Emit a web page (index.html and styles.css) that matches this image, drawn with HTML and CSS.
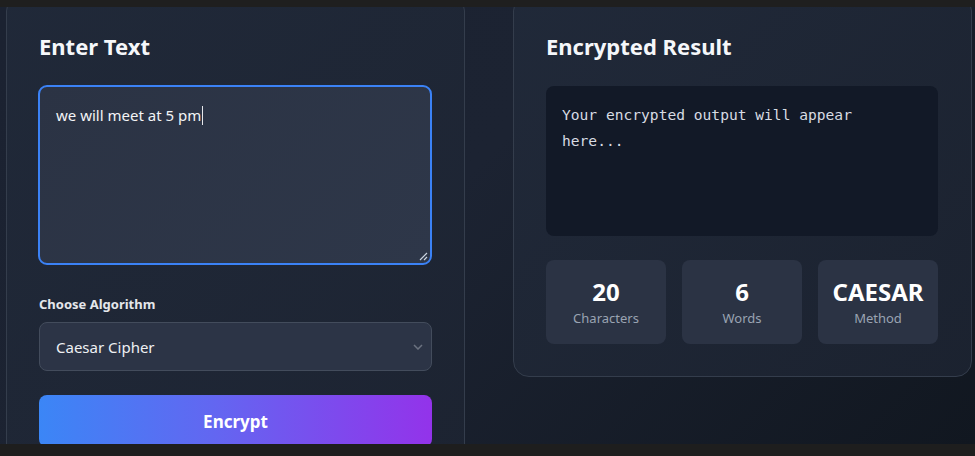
FILE: index.html
```html
<!DOCTYPE html>
<html lang="en">
<head>
<meta charset="utf-8">
<title>Cipher Tool</title>
<link rel="stylesheet" href="styles.css">
</head>
<body>
<div class="topbar"></div>
<main class="stage">
  <section class="card card-input">
    <h2 class="card-title">Enter Text</h2>
    <div class="textarea-box">
      <span class="typed">we will meet at 5 pm</span><span class="caret"></span>
      <svg class="grip" width="9" height="9" viewBox="0 0 9 9"><path d="M8 1 L1 8 M8 5 L5 8" stroke="#cbd5e1" stroke-width="1.2" fill="none"/></svg>
    </div>
    <label class="field-label">Choose Algorithm</label>
    <div class="select-box">
      <span>Caesar Cipher</span>
      <svg class="chev" width="10" height="6" viewBox="0 0 10 6"><path d="M1 1 L5 5 L9 1" stroke="#6b7280" stroke-width="1.5" fill="none"/></svg>
    </div>
    <button class="btn-encrypt">Encrypt</button>
  </section>
  <section class="card card-result">
    <h2 class="card-title result-title">Encrypted Result</h2>
    <div class="output-box">Your encrypted output will appear here...</div>
    <div class="stats">
      <div class="stat"><div class="stat-num">20</div><div class="stat-label">Characters</div></div>
      <div class="stat"><div class="stat-num">6</div><div class="stat-label">Words</div></div>
      <div class="stat"><div class="stat-num">CAESAR</div><div class="stat-label">Method</div></div>
    </div>
  </section>
</main>
<div class="bottombar"></div>
</body>
</html>
```
FILE: styles.css
```css
* { box-sizing: border-box; }
html, body { margin: 0; height: 100%; }
body {
  display: flex;
  flex-direction: column;
  height: 456px;
  overflow: hidden;
  background: #1e1e1e;
  font-family: "Noto Sans", "Open Sans", sans-serif;
  color: #f3f4f6;
}
.topbar { height: 7px; flex: none; background: #1f1f1f; }
.bottombar { height: 12px; flex: none; background: #1e1e1e; }
.stage {
  flex: 1;
  overflow: hidden;
  display: grid;
  grid-template-columns: 459px 459px;
  column-gap: 48px;
  align-items: start;
  padding-left: 6px;
  background: linear-gradient(135deg, #1b2231 0%, #1c2332 45%, #111720 100%);
}
.card {
  margin-top: -12px;
  border: 1px solid #343d4c;
  border-radius: 16px;
  padding: 34px 32px 32px;
  background: linear-gradient(135deg, rgba(33,42,58,0.85), rgba(29,36,50,0.85));
}
.card-input { padding-bottom: 60px; border-bottom-left-radius: 0; border-bottom-right-radius: 0; }
.card-result { padding-right: 33px; }
.card-title {
  margin: 0 0 23px;
  font-size: 22px;
  line-height: 32px;
  font-weight: 700;
  color: #f5f7fa;
}
.result-title { margin-bottom: 24px; }
.textarea-box {
  position: relative;
  height: 180px;
  margin-left: -1px;
  border: 2px solid #3b82f6;
  border-radius: 9px;
  background: linear-gradient(135deg, #2b3344, #2e3749);
  padding: 16px 16px;
  font-size: 15px;
  line-height: 24px;
  color: #f3f4f6;
}
.caret { display: inline-block; width: 1px; height: 19px; background: #e5e7eb; vertical-align: -4px; margin-left: 1px; }
.grip { position: absolute; right: 2px; bottom: 2px; }
.field-label {
  display: block;
  margin: 29px 0 8px;
  font-size: 13px;
  line-height: 20px;
  font-weight: 700;
  color: #e5e7eb;
}
.select-box {
  display: flex;
  align-items: center;
  justify-content: space-between;
  height: 49px;
  padding: 0 8px 0 16px;
  border: 1px solid #434c5c;
  border-radius: 8px;
  background: #2c3446;
  font-size: 15px;
  color: #eef0f3;
}
.btn-encrypt {
  display: block;
  width: 100%;
  margin-top: 24px;
  height: 52px;
  border: none;
  border-radius: 8px;
  background: linear-gradient(90deg, #3b86f6 0%, #6366f1 45%, #9333ea 100%);
  color: #ffffff;
  font-family: inherit;
  font-size: 17px;
  font-weight: 700;
}
.output-box {
  height: 150px;
  border-radius: 8px;
  background: #121927;
  padding: 16px 20px 16px 16px;
  font-family: "DejaVu Sans Mono", "Liberation Mono", monospace;
  font-size: 14.6px;
  line-height: 26px;
  color: #d8dce3;
}
.stats {
  margin-top: 24px;
  display: grid;
  grid-template-columns: repeat(3, 1fr);
  gap: 16px;
}
.stat {
  height: 84px;
  border-radius: 8px;
  background: #2b3344;
  padding: 16px 4px;
  text-align: center;
}
.stat-num { font-size: 24px; line-height: 32px; font-weight: 700; color: #ffffff; }
.stat-label { font-size: 13px; line-height: 20px; color: #9aa3b2; }
```
